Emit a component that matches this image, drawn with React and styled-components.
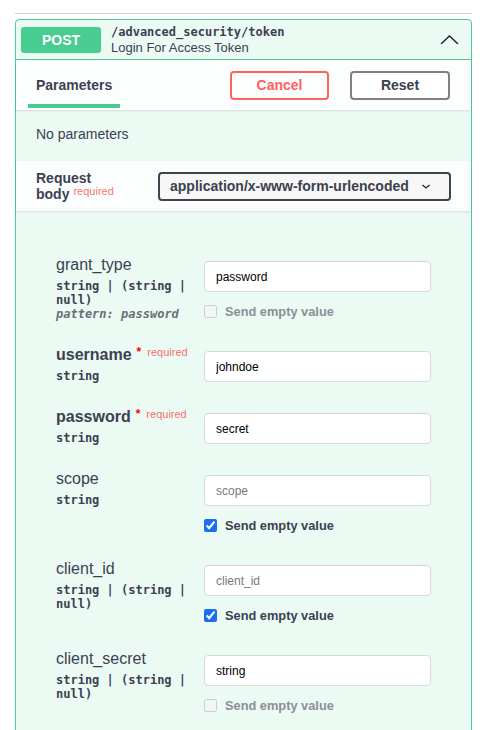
import styled, { createGlobalStyle } from "styled-components";

const GlobalStyle = createGlobalStyle`
  body {
    margin: 0;
    background: #fff;
    font-family: "Liberation Sans", Arial, sans-serif;
    color: #3b4151;
  }
`;

const mono = `"DejaVu Sans Mono", "Liberation Mono", monospace`;

const Page = styled.div`
  padding: 13px 8px 0 15px;
  height: 730px;
  overflow: hidden;
  box-sizing: border-box;
`;

const Divider = styled.div`
  border-top: 1px solid #cfd0d2;
  margin-bottom: 5px;
`;

const Card = styled.div`
  border: 1px solid #49cc90;
  border-radius: 4px;
  background: rgba(73, 204, 144, 0.1);
`;

const Header = styled.div`
  display: flex;
  align-items: center;
  height: 39px;
  padding: 0 12px 0 5px;
  border-bottom: 1px solid #49cc90;
`;

const Badge = styled.div`
  width: 80px;
  height: 26px;
  border-radius: 3px;
  background: #49cc90;
  color: #fff;
  font-weight: 700;
  font-size: 14px;
  display: flex;
  align-items: center;
  justify-content: center;
  margin-right: 10px;
`;

const PathBlock = styled.div`
  flex: 1;
  display: flex;
  flex-direction: column;
`;

const Path = styled.div`
  font-family: ${mono};
  font-weight: 700;
  font-size: 12px;
  line-height: 15px;
`;

const Summary = styled.div`
  font-size: 13px;
  line-height: 15px;
`;

const TabBar = styled.div`
  display: flex;
  align-items: center;
  height: 50px;
  padding: 0 21px 0 12px;
  background: rgba(255, 255, 255, 0.8);
  box-shadow: 0 1px 2px rgba(0, 0, 0, 0.1);
  position: relative;
`;

const Tab = styled.div`
  align-self: stretch;
  display: flex;
  align-items: center;
  padding: 0 8px;
  width: 92px;
  box-sizing: border-box;
  font-weight: 700;
  font-size: 14px;
  position: relative;
  &::after {
    content: "";
    position: absolute;
    left: 0;
    right: 0;
    bottom: 2px;
    height: 4px;
    background: #49cc90;
  }
`;

const Actions = styled.div`
  margin-left: auto;
  display: flex;
  gap: 21px;
`;

const ActionButton = styled.button`
  width: ${(p) => p.$w}px;
  height: 29px;
  border: 2px solid ${(p) => (p.$danger ? "#ff6060" : "#808080")};
  border-radius: 4px;
  background: ${(p) => (p.$danger ? "transparent" : "#fff")};
  color: ${(p) => (p.$danger ? "#ff6060" : "#3b4151")};
  font-family: inherit;
  font-weight: 700;
  font-size: 14px;
  padding: 0;
`;

const Empty = styled.div`
  height: 51px;
  padding: 0 20px 4px;
  box-sizing: border-box;
  display: flex;
  align-items: center;
  font-size: 14px;
`;

const BodyHead = styled.div`
  display: flex;
  align-items: center;
  height: 50px;
  padding: 0 20px;
  background: rgba(255, 255, 255, 0.8);
  box-shadow: 0 1px 2px rgba(0, 0, 0, 0.1);
  position: relative;
`;

const BodyLabel = styled.div`
  width: 122px;
  font-weight: 700;
  font-size: 14px;
  line-height: 16px;
`;

const RequiredTag = styled.span`
  color: rgba(255, 0, 0, 0.6);
  font-size: 11px;
  font-weight: 400;
  position: relative;
  top: ${(p) => p.$top}px;
  margin-left: ${(p) => p.$gap}px;
`;

const Select = styled.div`
  flex: 1;
  height: 29px;
  box-sizing: border-box;
  border: 2px solid #41444e;
  border-radius: 4px;
  background: #f7f7f7;
  display: flex;
  align-items: center;
  padding: 0 18px 0 10px;
  font-weight: 700;
  font-size: 14px;
  justify-content: space-between;
`;

const Form = styled.div`
  padding: 35px 0 60px 40px;
`;

const Row = styled.div`
  display: grid;
  grid-template-columns: 148px 227px;
  align-items: start;
  padding: 10px 0 16px;
`;

const NameCell = styled.div`
  display: flex;
  flex-direction: column;
  margin-bottom: -10px;
`;

const Name = styled.div`
  font-size: 16px;
  line-height: 18px;
  height: 18px;
  font-weight: ${(p) => (p.$required ? 700 : 400)};
`;

const Star = styled.span`
  color: red;
  font-size: 12px;
  line-height: 1;
  position: relative;
  top: -4px;
  margin-left: 5px;
`;

const TypeLine = styled.div`
  font-family: ${mono};
  font-weight: 700;
  font-size: 12px;
  line-height: 14px;
  margin-top: 5px;
`;

const Pattern = styled.div`
  font-family: ${mono};
  font-style: italic;
  font-weight: 700;
  font-size: 12px;
  line-height: 14px;
  color: #6b6f78;
`;

const ValueCell = styled.div`
  padding-top: 5px;
`;

const Input = styled.input`
  display: block;
  width: 100%;
  height: 31px;
  box-sizing: border-box;
  border: 1px solid #d9d9d9;
  border-radius: 4px;
  background: #fff;
  padding: 0 11px;
  font-family: "Liberation Sans", Arial, sans-serif;
  font-size: 12px;
  color: #000;
  outline: none;
  &::placeholder {
    color: #7a7a7a;
  }
`;

const CheckRow = styled.label`
  display: flex;
  align-items: center;
  height: 18px;
  margin-top: 10px;
  gap: 8px;
  font-weight: 700;
  font-size: 12.8px;
  color: ${(p) => (p.$disabled ? "#8b8f97" : "#3b4151")};
  input {
    margin: 0;
    width: 13px;
    height: 13px;
    accent-color: #1a6ff0;
  }
`;

const Chevron = ({ up, size, stroke }) => (
  <svg width={size} height={size / 2} viewBox="0 0 20 10" fill="none">
    <path
      d={up ? "M1 9.5 L10 1 L19 9.5" : "M3 2 L10 8 L17 2"}
      stroke="#222"
      strokeWidth={stroke}
    />
  </svg>
);

const params = [
  { name: "grant_type", type: ["string | (string |", "null)"], pattern: "password", value: "password", check: "off" },
  { name: "username", required: true, type: ["string"], value: "johndoe" },
  { name: "password", required: true, type: ["string"], value: "secret" },
  { name: "scope", type: ["string"], placeholder: "scope", check: "on" },
  { name: "client_id", type: ["string | (string |", "null)"], placeholder: "client_id", check: "on" },
  { name: "client_secret", type: ["string | (string |", "null)"], value: "string", check: "off" },
];

export default function App() {
  return (
    <>
      <GlobalStyle />
      <Page>
        <Divider />
        <Card>
          <Header>
            <Badge>POST</Badge>
            <PathBlock>
              <Path>/advanced_security/token</Path>
              <Summary>Login For Access Token</Summary>
            </PathBlock>
            <Chevron up size={19} stroke={1.5} />
          </Header>
          <TabBar>
            <Tab>Parameters</Tab>
            <Actions>
              <ActionButton $danger $w={99}>Cancel</ActionButton>
              <ActionButton $w={100}>Reset</ActionButton>
            </Actions>
          </TabBar>
          <Empty>No parameters</Empty>
          <BodyHead>
            <BodyLabel>
              Request
              <br />
              body<RequiredTag $top={-4} $gap={4}>required</RequiredTag>
            </BodyLabel>
            <Select>
              application/x-www-form-urlencoded
              <Chevron size={10} stroke={2.4} />
            </Select>
          </BodyHead>
          <Form>
            {params.map((p) => (
              <Row key={p.name}>
                <NameCell>
                  <Name $required={p.required}>
                    {p.name}
                    {p.required && (
                      <>
                        <Star>*</Star>
                        <RequiredTag $top={-4} $gap={6}>required</RequiredTag>
                      </>
                    )}
                  </Name>
                  <TypeLine>
                    {p.type.map((t) => (
                      <div key={t}>{t}</div>
                    ))}
                  </TypeLine>
                  {p.pattern && <Pattern>pattern: {p.pattern}</Pattern>}
                </NameCell>
                <ValueCell>
                  <Input
                    defaultValue={p.value}
                    placeholder={p.placeholder}
                    readOnly
                  />
                  {p.check && (
                    <CheckRow $disabled={p.check === "off"}>
                      <input
                        type="checkbox"
                        defaultChecked={p.check === "on"}
                        disabled={p.check === "off"}
                      />
                      Send empty value
                    </CheckRow>
                  )}
                </ValueCell>
              </Row>
            ))}
          </Form>
        </Card>
      </Page>
    </>
  );
}
